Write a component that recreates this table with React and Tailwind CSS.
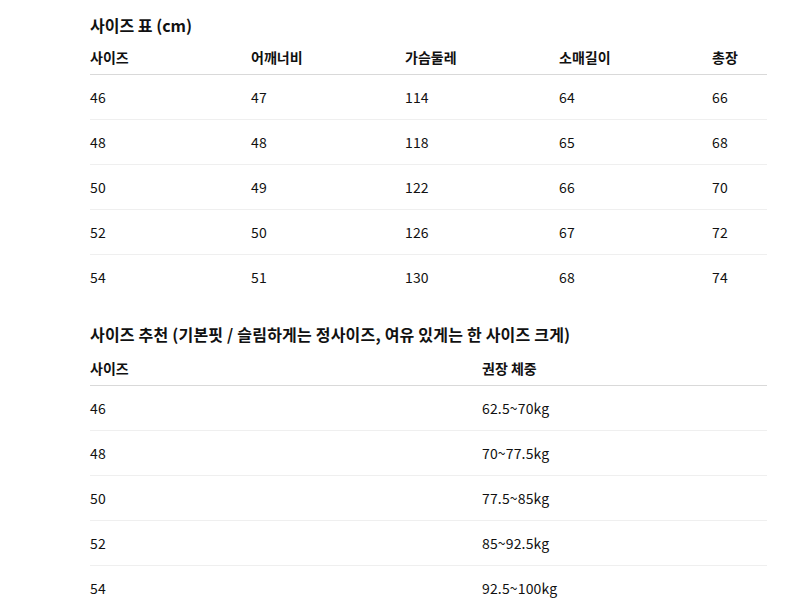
const sizeChart = {
  cols: ["사이즈", "어깨너비", "가슴둘레", "소매길이", "총장"],
  widths: "grid-cols-[161px_154px_154px_153px_1fr]",
  rows: [
    ["46", "47", "114", "64", "66"],
    ["48", "48", "118", "65", "68"],
    ["50", "49", "122", "66", "70"],
    ["52", "50", "126", "67", "72"],
    ["54", "51", "130", "68", "74"],
  ],
};

const recommend = {
  cols: ["사이즈", "권장 체중"],
  widths: "grid-cols-[392px_1fr]",
  rows: [
    ["46", "62.5~70kg"],
    ["48", "70~77.5kg"],
    ["50", "77.5~85kg"],
    ["52", "85~92.5kg"],
    ["54", "92.5~100kg"],
  ],
};

function Table({ data }) {
  return (
    <div>
      <div className={`grid ${data.widths} border-b border-[#d9d9d9] h-[35px] items-center`}>
        {data.cols.map((c) => (
          <div key={c} className="font-bold text-[14px]">{c}</div>
        ))}
      </div>
      {data.rows.map((r, i) => (
        <div
          key={i}
          className={`grid ${data.widths} h-[45px] items-center ${i < data.rows.length - 1 ? "border-b border-[#efefef]" : ""}`}
        >
          {r.map((v, j) => (
            <div key={j} className="text-[14px] tracking-[0.15px]">{v}</div>
          ))}
        </div>
      ))}
    </div>
  );
}

export default function App() {
  return (
    <div
      className="bg-white text-[#111] w-[800px] h-[600px] overflow-hidden pl-[90px] pr-[33px] pt-[13px]"
      style={{ fontFamily: '"Noto Sans CJK KR", "Noto Sans", sans-serif' }}
    >
      <h2 className="font-bold text-[16px] h-[27px] leading-[24px]">사이즈 표 (cm)</h2>
      <Table data={sizeChart} />
      <h2 className="font-bold text-[16px] tracking-[0.2px] h-[29px] leading-[24px] mt-[22px]">
        사이즈 추천 (기본핏 / 슬림하게는 정사이즈, 여유 있게는 한 사이즈 크게)
      </h2>
      <Table data={recommend} />
    </div>
  );
}
